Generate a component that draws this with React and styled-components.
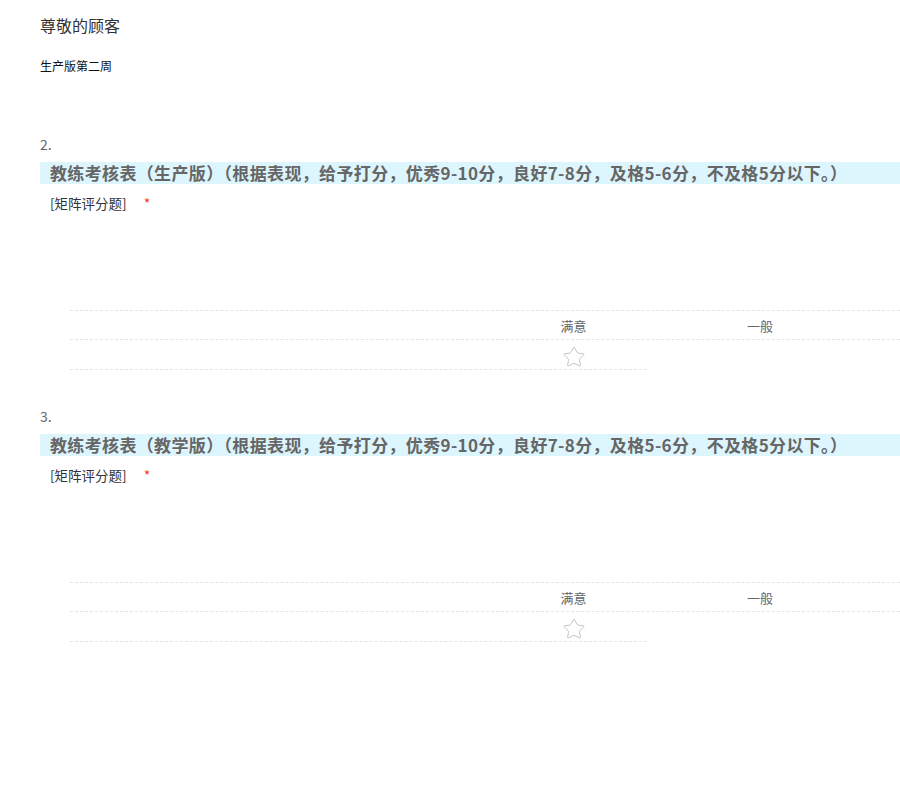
import React from "react";
import styled, { createGlobalStyle } from "styled-components";
import { Star } from "lucide-react";

const GlobalStyle = createGlobalStyle`
  html, body { margin: 0; padding: 0; background: #fff; }
  body { font-family: "Noto Sans CJK SC", "Noto Sans", sans-serif; }
`;

const Page = styled.div`
  padding: 13px 0 60px 40px;
  width: 860px;
  overflow: hidden;
`;

const Greeting = styled.div`
  font-size: 16px;
  line-height: 24px;
  color: #333;
`;

const Week = styled.div`
  margin-top: 20px;
  font-size: 12px;
  line-height: 18px;
  color: #111;
`;

const Section = styled.section`
  margin-top: ${(p) => p.$top}px;
`;

const Number = styled.div`
  font-size: 14px;
  line-height: 20px;
  color: #666;
`;

const TitleBar = styled.div`
  margin-top: 8px;
  background: #ddf5fd;
  height: 22px;
  padding-left: 10px;
  font-size: 17px;
  line-height: 22px;
  font-weight: bold;
  letter-spacing: 0.35px;
  color: #666;
  white-space: nowrap;
`;

const TypeLine = styled.div`
  margin-top: 9px;
  padding-left: 10px;
  font-size: 13.5px;
  line-height: 20px;
  color: #333;
  display: flex;
  gap: 17px;
`;

const Required = styled.span`
  color: #f33;
  font-size: 14px;
`;

const Matrix = styled.div`
  margin: 97px 0 0 30px;
`;

const Row = styled.div`
  display: flex;
  height: 30px;
  width: ${(p) => (p.$w ? `${p.$w}px` : "auto")};
  border-top: ${(p) => (p.$top ? "1px dashed #e4e4e4" : "none")};
  border-bottom: 1px dashed #e4e4e4;
  box-sizing: border-box;
`;

const Cell = styled.div`
  width: ${(p) => p.$w}px;
  flex: none;
  display: flex;
  align-items: center;
  justify-content: center;
  font-size: 13px;
  color: #666;
`;

const StarIcon = styled(Star)`
  color: #c4c4c4;
  margin-top: 4px;
`;

function Question({ num, title, top }) {
  return (
    <Section $top={top}>
      <Number>{num}.</Number>
      <TitleBar>{title}</TitleBar>
      <TypeLine>
        <span>[矩阵评分题]</span>
        <Required>*</Required>
      </TypeLine>
      <Matrix>
        <Row $top>
          <Cell $w={430} />
          <Cell $w={147}>满意</Cell>
          <Cell $w={226}>一般</Cell>
        </Row>
        <Row $w={577}>
          <Cell $w={430} />
          <Cell $w={147}>
            <StarIcon size={24} strokeWidth={1} />
          </Cell>
        </Row>
      </Matrix>
    </Section>
  );
}

export default function App() {
  return (
    <>
      <GlobalStyle />
      <Page>
        <Greeting>尊敬的顾客</Greeting>
        <Week>生产版第二周</Week>
        <Question
          top={59}
          num={2}
          title="教练考核表（生产版）（根据表现，给予打分，优秀9-10分，良好7-8分，及格5-6分，不及格5分以下。）"
        />
        <Question
          top={36}
          num={3}
          title="教练考核表（教学版）（根据表现，给予打分，优秀9-10分，良好7-8分，及格5-6分，不及格5分以下。）"
        />
      </Page>
    </>
  );
}
